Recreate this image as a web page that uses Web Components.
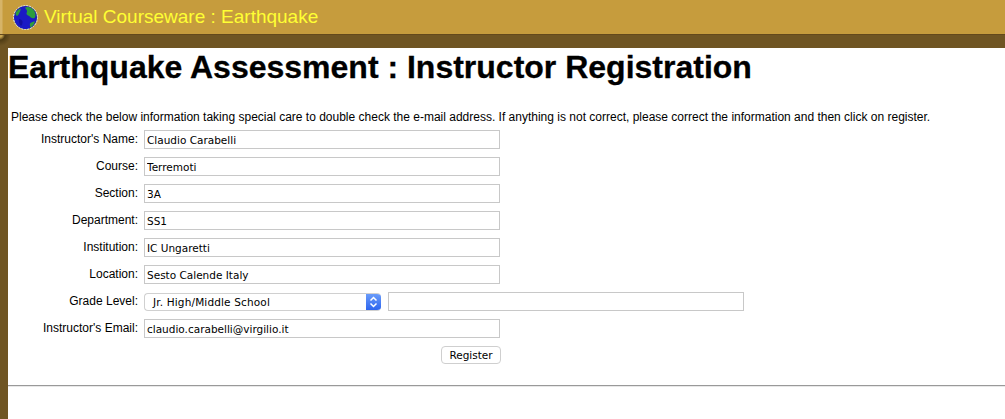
<!DOCTYPE html>
<html>
<head>
<meta charset="utf-8">
<title>Earthquake Assessment</title>
<style>
    html, body { margin: 0; padding: 0; background: #fff; height: 100%; overflow: hidden; }
    body { font-family: "Liberation Sans", Arial, sans-serif; }
</style>
</head>
<body>
<vc-page>
    <span slot="brand">Virtual Courseware : Earthquake</span>
    <vc-title>Earthquake Assessment : Instructor Registration</vc-title>
    <vc-note>Please check the below information taking special care to double check the e-mail address. If anything is not correct, please correct the information and then click on register.</vc-note>
    <vc-form>
        <vc-row label="Instructor's Name:" value="Claudio Carabelli"></vc-row>
        <vc-row label="Course:" value="Terremoti"></vc-row>
        <vc-row label="Section:" value="3A"></vc-row>
        <vc-row label="Department:" value="SS1"></vc-row>
        <vc-row label="Institution:" value="IC Ungaretti"></vc-row>
        <vc-row label="Location:" value="Sesto Calende Italy"></vc-row>
        <vc-grade-row label="Grade Level:" value="Jr. High/Middle School"></vc-grade-row>
        <vc-row label="Instructor's Email:" value="claudio.carabelli@virgilio.it"></vc-row>
        <vc-submit>Register</vc-submit>
    </vc-form>
    <vc-rule></vc-rule>
</vc-page>

<script>
(function () {

    const CONTROL_FONT = '10.5px "DejaVu Sans", "Liberation Sans", sans-serif';

    const FIELD_CSS = '\
        .row { display: flex; align-items: center; height: 27px; }\
        label { width: 130px; padding-bottom: 2px; text-align: right; font-size: 12px; line-height: 14px; color: #000; flex: none; }\
        input { box-sizing: border-box; width: 356px; height: 19px; margin: 0 0 0 6px; padding: 1px 2px;\
            border: 1px solid #c8c8c8; background: #fff; font: ' + CONTROL_FONT + '; color: #000; outline: none; }\
    ';

    class VcPage extends HTMLElement {
        constructor() {
            super();
            this.attachShadow({ mode: 'open' }).innerHTML = `
            <style>
                :host { display: flex; flex-direction: column; height: 419px; }
                .banner { flex: none; height: 34px; display: flex; align-items: center; gap: 6px; padding-left: 13px;
                    background: linear-gradient(to right, #d6b468 0, #d6b468 2px, #c69c3d 3px);
                    color: #ffff33; font-size: 19px; }
                svg { flex: none; }
                .body { flex: 1; display: flex; min-height: 0; border-top: 1px solid #63491c;
                    background: radial-gradient(circle at 0 0, #c9a650 0, #c9a650 2px, #4f3c14 5px, #6f5523 11px) 0 0 / 10px 14px no-repeat, #6f5523; }
                .panel { flex: 1; display: flex; flex-direction: column; margin: 13px 0 0 8px; background: #fff; min-width: 0; }
            </style>
            <div class="banner">
                <svg width="25" height="25" viewBox="0 0 25 25">
                    <circle cx="12.5" cy="12.5" r="11.5" fill="#1a1ac4"/>
                    <circle cx="12.5" cy="12.5" r="12" fill="none" stroke="#d8eef0" stroke-width="1" stroke-dasharray="2 1"/>
                    <path d="M12 2.5c3-1.500 7 0 9 3 1.500 2 2 5 1 7-1 1-2 1-3 .5-2-.5-2-2-4-2.500-1.500-1-2-2-1-3.500 .5-1.500-1-3-2-4.500z" fill="#2c9c3e"/>
                    <path d="M2.500 8c1-2 3-4 5-4.500 .5 1.500-.5 3-1 4-.5 1.500-1.500 3-2.500 3.500-1-.5-1.500-1.500-1.500-3z" fill="#2c9c3e"/>
                    <path d="M17 18.500c1.500-1.500 3.500-2 5-2-.5 2.500-2.500 5-4.500 6-.5-1.500-1-3-.5-4z" fill="#2c9c3e"/>
                    <path d="M6 14c1.500 0 3 1 3.500 2.500 0 2-.5 3.500-1.500 4.500-1.500-1.500-2.500-4-2-7z" fill="#1210a0"/>
                </svg>
                <slot name="brand"></slot>
            </div>
            <div class="body">
                <div class="panel"><slot></slot></div>
            </div>
            `;
        }
    }

    class VcTitle extends HTMLElement {
        constructor() {
            super();
            this.attachShadow({ mode: 'open' }).innerHTML = `
            <style>
                :host { display: block; font-size: 32px; font-weight: bold; line-height: 37px; color: #000; padding-top: 1px; -webkit-text-stroke: 0.3px #000; }
            </style>
            <slot></slot>`;
        }
    }

    class VcNote extends HTMLElement {
        constructor() {
            super();
            this.attachShadow({ mode: 'open' }).innerHTML = `
            <style>
                :host { display: block; font-size: 12px; line-height: 14px; color: #000; margin-top: 24px; padding-left: 3px; white-space: nowrap; }
            </style>
            <slot></slot>`;
        }
    }

    class VcForm extends HTMLElement {
        constructor() {
            super();
            this.attachShadow({ mode: 'open' }).innerHTML = `
            <style>
                :host { display: block; margin-top: 2px; }
            </style>
            <slot></slot>`;
        }
    }

    class VcRow extends HTMLElement {
        constructor() {
            super();
            this.attachShadow({ mode: 'open' }).innerHTML = `
            <style>:host { display: block; } ${FIELD_CSS}</style>
            <div class="row">
                <label>${this.getAttribute('label')}</label>
                <input type="text" value="${this.getAttribute('value')}">
            </div>`;
        }
    }

    class VcGradeRow extends HTMLElement {
        constructor() {
            super();
            this.attachShadow({ mode: 'open' }).innerHTML = `
            <style>
                :host { display: block; }
                ${FIELD_CSS}
                .select { box-sizing: border-box; display: flex; align-items: stretch; width: 237px; height: 18px; margin-left: 6px;
                    border: 1px solid #d0d0d0; border-width: 1px 0 1px 1px; border-radius: 4px; background: #fff; font: ${CONTROL_FONT}; letter-spacing: .15px; overflow: hidden; }
                .text { flex: 1; align-self: center; padding-left: 8px; }
                .spin { flex: none; width: 15px; margin: -1px 0; background: linear-gradient(#6d9ffb, #2a62ee); display: flex; align-items: center; justify-content: center; }
                .extra { margin-left: 7px; }
            </style>
            <div class="row">
                <label>${this.getAttribute('label')}</label>
                <div class="select">
                    <span class="text">${this.getAttribute('value')}</span>
                    <span class="spin">
                        <svg width="9" height="12" viewBox="0 0 9 12" fill="none" stroke="#fff" stroke-width="1.5">
                            <path d="M1.5 4.5 4.5 1.5 7.5 4.5M1.5 7.5 4.5 10.5 7.5 7.5"/>
                        </svg>
                    </span>
                </div>
                <input class="extra" type="text" value="">
            </div>`;
        }
    }

    class VcSubmit extends HTMLElement {
        constructor() {
            super();
            this.attachShadow({ mode: 'open' }).innerHTML = `
            <style>
                :host { display: flex; justify-content: flex-end; width: 493px; padding-top: 4px; }
                button { box-sizing: border-box; width: 60px; height: 18px; padding: 0; border: 1px solid #cfcfcf; border-radius: 4px; background: #fff;
                    font: ${CONTROL_FONT}; color: #000; }
            </style>
            <button type="button"><slot></slot></button>`;
        }
    }

    class VcRule extends HTMLElement {
        constructor() {
            super();
            this.attachShadow({ mode: 'open' }).innerHTML = `
            <style>
                :host { display: block; margin-top: 21px; height: 2px; background: linear-gradient(#999 0, #999 1px, #e8e8e8 1px); }
            </style>`;
        }
    }

    customElements.define('vc-page', VcPage);
    customElements.define('vc-title', VcTitle);
    customElements.define('vc-note', VcNote);
    customElements.define('vc-form', VcForm);
    customElements.define('vc-row', VcRow);
    customElements.define('vc-grade-row', VcGradeRow);
    customElements.define('vc-submit', VcSubmit);
    customElements.define('vc-rule', VcRule);

})();
</script>
</body>
</html>
